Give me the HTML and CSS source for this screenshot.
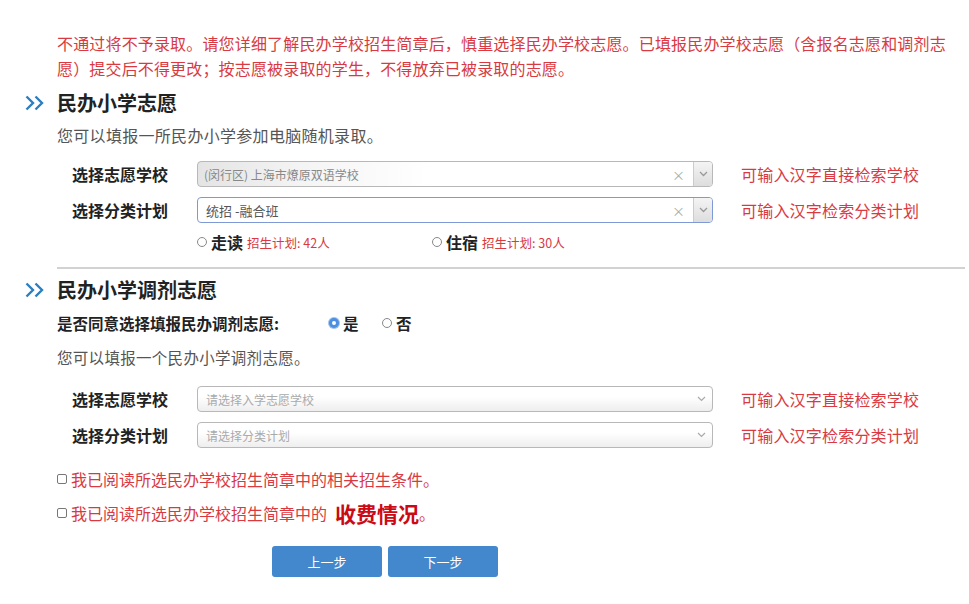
FILE: index.html
```html
<!DOCTYPE html>
<html lang="zh-CN">
<head>
<meta charset="UTF-8">
<meta name="viewport" content="width=device-width, initial-scale=1.0">
<title>民办小学志愿</title>
<link rel="stylesheet" href="styles.css">
</head>
<body>
<div class="content">
    <p class="notice">不通过将不予录取。请您详细了解民办学校招生简章后，慎重选择民办学校志愿。已填报民办学校志愿（含报名志愿和调剂志愿）提交后不得更改；按志愿被录取的学生，不得放弃已被录取的志愿。</p>

    <h2 class="section-title">
        <svg class="arrows" width="20" height="16" viewBox="0 0 20 16"><path d="M1.5 1.5 L8 8 L1.5 14.5 M10.5 1.5 L17 8 L10.5 14.5" fill="none" stroke="#2a7fc0" stroke-width="2.4"/></svg>
        民办小学志愿
    </h2>
    <p class="intro">您可以填报一所民办小学参加电脑随机录取。</p>

    <div class="form-row">
        <label class="row-label">选择志愿学校</label>
        <div class="select-box filled">
            <span class="select-text">(闵行区) 上海市燎原双语学校</span>
            <span class="clear">×</span>
            <span class="drop"><svg width="9" height="6" viewBox="0 0 9 6"><path d="M1 1 L4.5 4.5 L8 1" fill="none" stroke="#999" stroke-width="1.3"/></svg></span>
        </div>
        <span class="hint">可输入汉字直接检索学校</span>
    </div>
    <div class="form-row">
        <label class="row-label">选择分类计划</label>
        <div class="select-box focused">
            <span class="select-text dark">统招 -融合班</span>
            <span class="clear">×</span>
            <span class="drop"><svg width="9" height="6" viewBox="0 0 9 6"><path d="M1 1 L4.5 4.5 L8 1" fill="none" stroke="#999" stroke-width="1.3"/></svg></span>
        </div>
        <span class="hint">可输入汉字检索分类计划</span>
    </div>
    <div class="plan-row">
        <div class="plan-option">
            <span class="radio"></span>
            <b>走读</b>
            <span class="plan-count">招生计划: 42人</span>
        </div>
        <div class="plan-option">
            <span class="radio"></span>
            <b>住宿</b>
            <span class="plan-count">招生计划: 30人</span>
        </div>
    </div>

    <hr class="divider">

    <h2 class="section-title">
        <svg class="arrows" width="20" height="16" viewBox="0 0 20 16"><path d="M1.5 1.5 L8 8 L1.5 14.5 M10.5 1.5 L17 8 L10.5 14.5" fill="none" stroke="#2a7fc0" stroke-width="2.4"/></svg>
        民办小学调剂志愿
    </h2>
    <div class="agree-row">
        <span class="agree-label">是否同意选择填报民办调剂志愿:</span>
        <span class="choice"><span class="radio checked"></span>是</span>
        <span class="choice"><span class="radio"></span>否</span>
    </div>
    <p class="intro intro-second">您可以填报一个民办小学调剂志愿。</p>

    <div class="form-row">
        <label class="row-label">选择志愿学校</label>
        <div class="select-box">
            <span class="select-text placeholder">请选择入学志愿学校</span>
            <span class="drop plain"><svg width="9" height="6" viewBox="0 0 9 6"><path d="M1 1 L4.5 4.5 L8 1" fill="none" stroke="#aaa" stroke-width="1.2"/></svg></span>
        </div>
        <span class="hint">可输入汉字直接检索学校</span>
    </div>
    <div class="form-row">
        <label class="row-label">选择分类计划</label>
        <div class="select-box">
            <span class="select-text placeholder">请选择分类计划</span>
            <span class="drop plain"><svg width="9" height="6" viewBox="0 0 9 6"><path d="M1 1 L4.5 4.5 L8 1" fill="none" stroke="#aaa" stroke-width="1.2"/></svg></span>
        </div>
        <span class="hint">可输入汉字检索分类计划</span>
    </div>

    <div class="check-row first">
        <span class="checkbox"></span>
        <span>我已阅读所选民办学校招生简章中的相关招生条件。</span>
    </div>
    <div class="check-row">
        <span class="checkbox"></span>
        <span>我已阅读所选民办学校招生简章中的</span>
        <strong class="fee">收费情况</strong>
        <span>。</span>
    </div>

    <div class="buttons">
        <button class="btn">上一步</button>
        <button class="btn">下一步</button>
    </div>
</div>
</body>
</html>
```

FILE: styles.css
```css
body {
    margin: 0;
    padding: 0;
    background-color: #fff;
    color: #222;
    font-family: "Noto Sans CJK SC", "Liberation Sans", sans-serif;
}
.content {
    padding: 31px 0 0 57px;
}
.notice {
    width: 900px;
    margin: 0;
    font-size: 16px;
    line-height: 25px;
    letter-spacing: 0.16px;
    color: #d93a41;
}
.section-title {
    display: flex;
    align-items: center;
    gap: 12px;
    margin: 8px 0 0 -32px;
    font-size: 20px;
    line-height: 28px;
    font-weight: bold;
    color: #222;
}
.intro {
    margin: 6px 0 0 0;
    font-size: 16px;
    line-height: 24px;
    letter-spacing: 0.3px;
    color: #555;
}
.intro-second {
    margin-top: 10px;
    font-size: 15.5px;
}
.form-row {
    display: flex;
    align-items: center;
    height: 26px;
    margin-top: 10px;
}
.intro + .form-row {
    margin-top: 14px;
}
.intro-second + .form-row {
    margin-top: 17px;
}
.row-label {
    width: 125px;
    padding-left: 15px;
    font-size: 16px;
    font-weight: bold;
    color: #222;
}
.select-box {
    display: flex;
    align-items: center;
    box-sizing: border-box;
    width: 516px;
    height: 26px;
    border: 1px solid #b8b8b8;
    border-radius: 4px;
    background: linear-gradient(#fff 40%, #eee);
}
.select-box.filled {
    background: linear-gradient(to right, #e4e4e4, #f4f4f4 20%, #fff 45%);
}
.select-box.focused {
    border-color: #7f98d6;
    background: #fff;
}
.select-text {
    flex: 1;
    padding-left: 6px;
    font-size: 12px;
    color: #888;
}
.select-text.dark {
    padding-left: 8px;
    font-size: 13px;
    color: #555;
}
.select-text.placeholder {
    padding-left: 8px;
    color: #aaa;
}
.clear {
    font-size: 13px;
    color: #aaa;
    margin-right: 8px;
}
.drop {
    display: flex;
    align-items: center;
    justify-content: center;
    width: 18px;
    height: 100%;
    border-left: 1px solid #ccc;
    background: linear-gradient(#f4f4f4, #ddd);
    border-radius: 0 3px 3px 0;
}
.drop.plain {
    background: none;
    border-left: none;
    margin-right: 2px;
}
.hint {
    margin-left: 28px;
    font-size: 16px;
    letter-spacing: 0.2px;
    color: #d93a41;
}
.plan-row {
    display: flex;
    margin: 9px 0 0 140px;
    height: 20px;
    align-items: center;
}
.plan-option {
    display: flex;
    align-items: center;
    width: 235px;
    font-size: 16px;
}
.plan-option b {
    margin-left: 4px;
    color: #222;
}
.plan-count {
    margin-left: 4px;
    font-size: 12.5px;
    color: #d93a41;
}
.radio {
    display: inline-block;
    box-sizing: border-box;
    width: 10px;
    height: 10px;
    border: 1px solid #888;
    border-radius: 50%;
    background: #fff;
}
.radio.checked {
    border: 3px solid #4d8fe0;
    background: #fff;
    box-shadow: 0 0 0 1px #9cc0ef;
}
.divider {
    margin: 15px 4px 0 0;
    border: none;
    border-top: 2px solid #d2d2d2;
}
.divider + .section-title {
    margin-top: 7px;
}
.agree-row {
    display: flex;
    align-items: center;
    margin-top: 7px;
    height: 24px;
    font-weight: bold;
}
.agree-label {
    font-size: 15.5px;
    width: 272px;
}
.choice {
    display: flex;
    align-items: center;
    gap: 4px;
    width: 53px;
    font-size: 15.5px;
}
.check-row {
    display: flex;
    align-items: center;
    height: 24px;
    margin-top: 10px;
    font-size: 16px;
    color: #d93a41;
}
.check-row.first {
    margin-top: 19px;
}
.checkbox {
    display: inline-block;
    box-sizing: border-box;
    width: 10px;
    height: 10px;
    margin-right: 4px;
    border: 1px solid #777;
    border-radius: 2px;
}
.fee {
    margin-left: 8px;
    font-size: 21px;
    color: #cc0a14;
}
.buttons {
    display: flex;
    gap: 6px;
    margin: 21px 0 0 215px;
}
.btn {
    width: 110px;
    height: 31px;
    border: none;
    border-radius: 3px;
    background-color: #4388cc;
    color: #fff;
    font-family: "Noto Sans CJK SC", sans-serif;
    font-size: 13px;
    cursor: pointer;
}
```
